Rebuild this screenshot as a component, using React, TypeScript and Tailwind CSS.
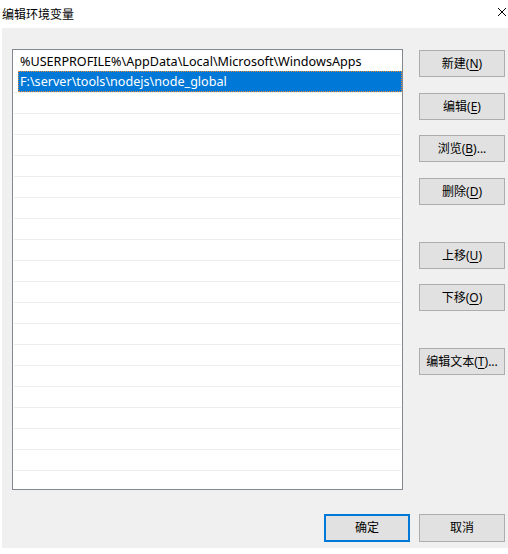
import React from "react";

const font = { fontFamily: '"Noto Sans", "Noto Sans CJK SC", sans-serif' };

function Btn({ label, k, suffix = "", className = "" }: { label: string; k: string; suffix?: string; className?: string }) {
  return (
    <button
      className={`w-[86px] h-[27px] bg-[#e1e1e1] border border-[#adadad] flex items-center justify-center text-[12px] text-black leading-none ${className}`}
    >
      <span>
        {label}(<span className="underline underline-offset-2">{k}</span>){suffix}
      </span>
    </button>
  );
}

export default function App() {
  const rows = Array.from({ length: 21 }, (_, i) => i);
  return (
    <div className="w-[508px] h-[554px] bg-white overflow-hidden" style={font}>
      <div className="h-[28px] flex items-center justify-between pl-[2px] pr-[1px]">
        <span className="text-[12px] text-black" style={{ fontFamily: '"Noto Sans CJK SC", sans-serif' }}>编辑环境变量</span>
        <svg width="10" height="10" viewBox="0 0 10 10" className="mt-[-4px]">
          <path d="M1 1 L9 9 M9 1 L1 9" stroke="#000" strokeWidth="1" />
        </svg>
      </div>
      <div className="ml-[2px] h-[520px] bg-[#f0f0f0] flex flex-col">
        <div className="flex pt-[21px] pl-[10px]">
          <div className="w-[391px] h-[441px] border border-[#828790] bg-white overflow-hidden">
            {rows.map((i) => {
              if (i === 1) {
                return (
                  <div key={i} className="h-[21px] ml-[5px] bg-[#0078d7] outline outline-1 outline-dotted outline-[#e08a3a] -outline-offset-1 text-white text-[12.6px] leading-[22px] pl-[2px] whitespace-nowrap">
                    F:\server\tools\nodejs\node_global
                  </div>
                );
              }
              return (
                <div
                  key={i}
                  className={`h-[21px] mx-[1px] ${i > 1 ? "border-t border-[#ededed]" : ""} text-[12.6px] leading-[23px] pl-[6px] whitespace-nowrap text-black`}
                >
                  {i === 0 ? "%USERPROFILE%\\AppData\\Local\\Microsoft\\WindowsApps" : ""}
                </div>
              );
            })}
          </div>
          <div className="flex flex-col ml-[16px] pt-[1px]">
            <Btn label="新建" k="N" />
            <Btn label="编辑" k="E" className="mt-[16px]" />
            <Btn label="浏览" k="B" suffix="..." className="mt-[15px]" />
            <Btn label="删除" k="D" className="mt-[16px]" />
            <Btn label="上移" k="U" className="mt-[37px]" />
            <Btn label="下移" k="O" className="mt-[15px]" />
            <Btn label="编辑文本" k="T" suffix="..." className="mt-[37px]" />
          </div>
        </div>
        <div className="flex justify-end gap-[9px] pr-[3px] mt-[24px]">
          <button className="w-[86px] h-[28px] bg-[#e1e1e1] border-2 border-[#0078d7] text-[12px] text-black">确定</button>
          <button className="w-[86px] h-[28px] bg-[#e1e1e1] border border-[#adadad] text-[12px] text-black">取消</button>
        </div>
      </div>
    </div>
  );
}
